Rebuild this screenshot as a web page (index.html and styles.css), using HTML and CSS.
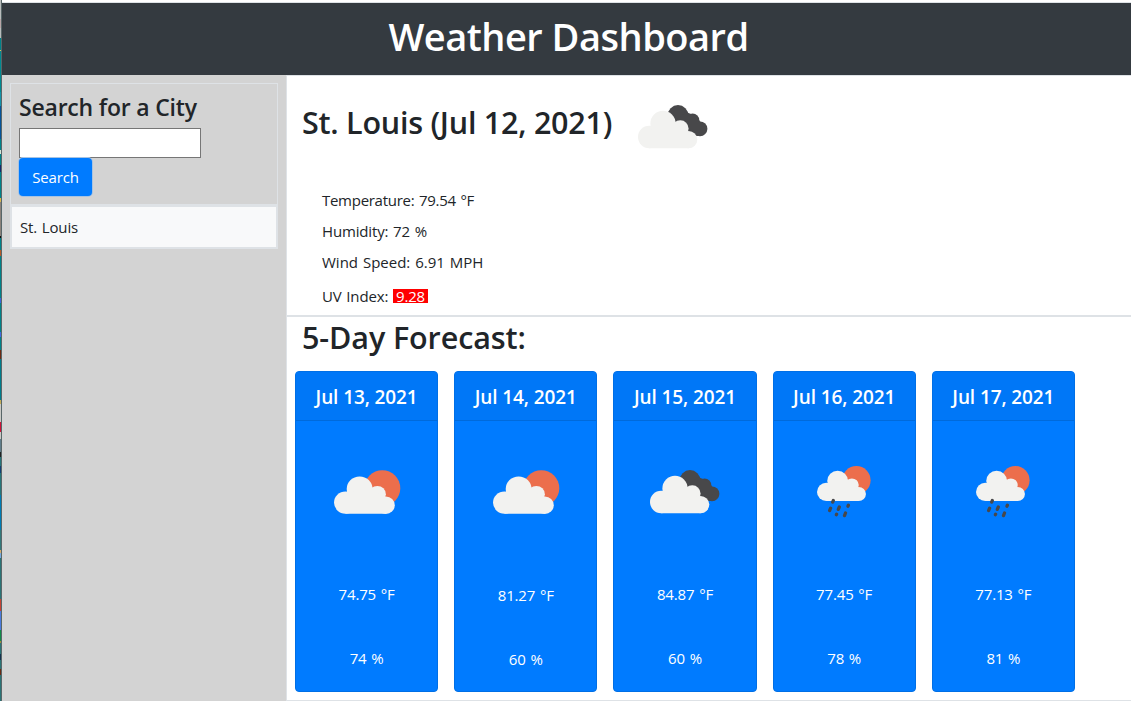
FILE: index.html
```
<!DOCTYPE html>
<html lang="en">
<head>
<meta charset="utf-8">
<title>Weather Dashboard</title>
<link rel="stylesheet" href="styles.css">
</head>
<body>
<svg class="defs" aria-hidden="true">
  <symbol id="cloud" viewBox="0 0 60 44">
    <circle cx="11.2" cy="32" r="11.2"/><circle cx="25" cy="18.4" r="12.6"/><circle cx="42.3" cy="23.6" r="8.3"/><circle cx="50.6" cy="34.6" r="8.7"/>
    <path d="M11.2 43.2h39.4V30L42 22L37.5 16.8H24L14 24z"/>
  </symbol>
  <symbol id="broken" viewBox="0 0 70 44">
    <g fill="#48484a"><circle cx="40" cy="10.5" r="10.4"/><circle cx="54.6" cy="15.2" r="6.7"/><circle cx="62" cy="23.8" r="7.4"/><path d="M34 18L48 7l10 4 6 8-4 12-12-1z"/></g>
    <use href="#cloud" width="60" height="44" fill="#f2f2f0"/>
  </symbol>
  <symbol id="sunny" viewBox="0 0 67 45">
    <circle cx="48.3" cy="18.2" r="18" fill="#ec6e4c"/>
    <g transform="translate(0 .6) scale(1.025 1)"><use href="#cloud" width="60" height="44" fill="#f2f2f0"/></g>
  </symbol>
  <symbol id="rain" viewBox="0 0 54 52">
    <circle cx="39.4" cy="14.3" r="14.2" fill="#ec6e4c"/>
    <g transform="scale(.825 .81)"><use href="#cloud" width="60" height="44" fill="#f2f2f0"/></g>
    <g stroke="#48484a" stroke-width="3.3" stroke-linecap="round"><path d="M16.3 34.5l-.6 1.6M13.6 42.2l-1 2.4M22.3 41l-1 2.4M31.4 39.2l-.4 1M19.6 48.2l-.2.5M28.5 47l-1 2.6"/></g>
  </symbol>
</svg>
<div class="window">
  <div class="edge"></div>
  <div class="page">
    <header class="banner"><h1>Weather Dashboard</h1></header>
    <div class="content">
      <aside class="sidebar">
        <div class="search">
          <h2>Search for a City</h2>
          <input type="text" aria-label="City">
          <button>Search</button>
        </div>
        <div class="city">St. Louis</div>
      </aside>
      <main>
        <section class="current">
          <div class="title"><h2>St. Louis (Jul 12, 2021)</h2><svg width="70" height="44"><use href="#broken"/></svg></div>
          <p class="temp">Temperature: 79.54 °F</p>
          <p class="hum">Humidity: 72 %</p>
          <p class="wind">Wind Speed: 6.91 MPH</p>
          <p class="uv">UV Index: <span class="high">9.28</span></p>
        </section>
        <section class="forecast">
          <h2>5-Day Forecast:</h2>
          <div class="cards">
            <article><h3>Jul 13, 2021</h3><div class="icon sun"><svg width="67" height="45"><use href="#sunny"/></svg></div><p>74.75 °F</p><p>74 %</p></article>
            <article class="low"><h3>Jul 14, 2021</h3><div class="icon sun"><svg width="67" height="45"><use href="#sunny"/></svg></div><p>81.27 °F</p><p>60 %</p></article>
            <article><h3>Jul 15, 2021</h3><div class="icon"><svg width="70" height="44"><use href="#broken"/></svg></div><p>84.87 °F</p><p>60 %</p></article>
            <article><h3>Jul 16, 2021</h3><div class="icon"><svg width="54" height="52"><use href="#rain"/></svg></div><p>77.45 °F</p><p>78 %</p></article>
            <article><h3>Jul 17, 2021</h3><div class="icon"><svg width="54" height="52"><use href="#rain"/></svg></div><p>77.13 °F</p><p>81 %</p></article>
          </div>
        </section>
      </main>
    </div>
  </div>
</div>
</body>
</html>
```
FILE: styles.css
```
* { box-sizing: border-box; }
body { margin: 0; background: #fff; color: #212529; font: 15px/24px "Open Sans", "Noto Sans", sans-serif; letter-spacing: -.15px; word-spacing: 1px; overflow: hidden; }
h1, h2, h3, p { margin: 0; white-space: nowrap; }
h1, h2, h3 { font-weight: 600; word-spacing: 0; }
svg { display: block; }
.defs { position: absolute; width: 0; height: 0; }
.window { display: flex; height: 701px; }
.edge { width: 2px; border-right: 1px solid #586668; background: linear-gradient(#b8bcbc 0 19px, #b9a6a8 19px 28px, #b8bcbc 28px 38px, #008289 38px 50px, #d8c45c 50px 51px, #008a91 51px 92px, #1492a8 92px 106px, #06549a 106px 139px, #008289 139px 150px, #d9e6d8 150px 154px, #008289 154px 165px, #102a70 165px 172px, #008289 172px 198px, #d9b64c 198px 202px, #8b8179 202px 236px, #111 236px 238px, #008289 238px 250px, #b65a28 250px 256px, #008289 256px 298px, #3d63dc 298px 303px, #008289 303px 332px, #4169e1 332px 337px, #008289 337px 350px, #6e2a12 350px 359px, #007d8c 359px 400px, #c4ad57 400px 404px, #c9c9c5 404px 422px, #cf1238 422px 432px, #c9c9c5 432px 439px, #607d8b 439px 452px, #222 452px 457px, #26767a 457px 466px, #123f76 466px 473px, #26767a 473px 495px, #007cb5 495px 530px, #32787a 530px 550px, #d6ab69 550px 553px, #76a9df 553px 558px, #2a7476 558px 599px, #c64334 599px 611px, #4b7bdd 611px 630px, #118b48 630px 641px, #9c8e38 641px 643px, #2a7476 643px 654px, #123350 654px 660px, #2a7476 660px 669px, #6e2a12 669px 675px, #2a7476 675px); }
.page { flex: 1; display: flex; flex-direction: column; padding-top: 2px; }
.banner { height: 73px; border-top: 1px solid #dee2e6; background: #343a40; color: #fff; text-align: center; }
.banner h1 { font-size: 38px; line-height: 67px; letter-spacing: -.5px; padding-left: 4px; }
.content { flex: 1; display: flex; }
.sidebar { width: 284px; padding: 8px; background: #d3d3d3; }
.search { height: 121px; padding: 8px; border: 1px solid #dee2e6; border-bottom: 0; }
.search h2 { font-size: 23px; line-height: 31px; margin-bottom: 5px; letter-spacing: -.2px; }
.search input { display: block; width: 182px; height: 30px; border: 1px solid #767676; background: #fff; margin: 0; }
.search button { display: block; width: 73px; height: 38px; border: 0; border-radius: 4px; background: #007bff; color: #fff; font: inherit; letter-spacing: inherit; padding: 0; box-shadow: 0 0 0 1px #a7c3e2; }
.city { height: 45px; padding: 8px; border: 2px solid #dee2e6; border-top-width: 3px; background: #f8f9fa; line-height: 24px; }
main { flex: 1; border-left: 1px solid #dee2e6; border-top: 1px solid #dee2e6; border-bottom: 1px solid #dee2e6; display: flex; flex-direction: column; }
.current { height: 241px; border-bottom: 2px solid #dee2e6; }
.title { display: flex; padding: 29px 0 0 15px; height: 112px; }
.title h2 { width: 336px; font-size: 30.5px; line-height: 34px; letter-spacing: -.25px; }
.current p { padding-left: 35px; height: 31px; }
.current .temp { letter-spacing: -.28px; }
.current .wind { letter-spacing: 0; }
.current .uv { padding-top: 3px; }
.high { background: red; color: #fff; padding: 0 3px; display: inline-block; height: 14px; line-height: 14px; }
.forecast { flex: 1; padding-left: 8px; }
.forecast h2 { padding-left: 7px; font-size: 30.5px; line-height: 40px; height: 54px; letter-spacing: -.1px; }
.cards { display: flex; gap: 16px; }
article { width: 143.2px; height: 321px; border: 1px solid #006fe6; border-radius: 4px; background: #007bff; color: #fff; text-align: center; overflow: hidden; }
article h3 { height: 49px; border-bottom: 1px solid #006adb; background: #0077f7; font-size: 19px; line-height: 50px; letter-spacing: -.1px; }
.icon { height: 142px; display: flex; justify-content: center; align-items: center; }
.sun { padding-left: 2px; }
article p { height: 64px; line-height: 62px; }
.low .icon { height: 143px; }
```
